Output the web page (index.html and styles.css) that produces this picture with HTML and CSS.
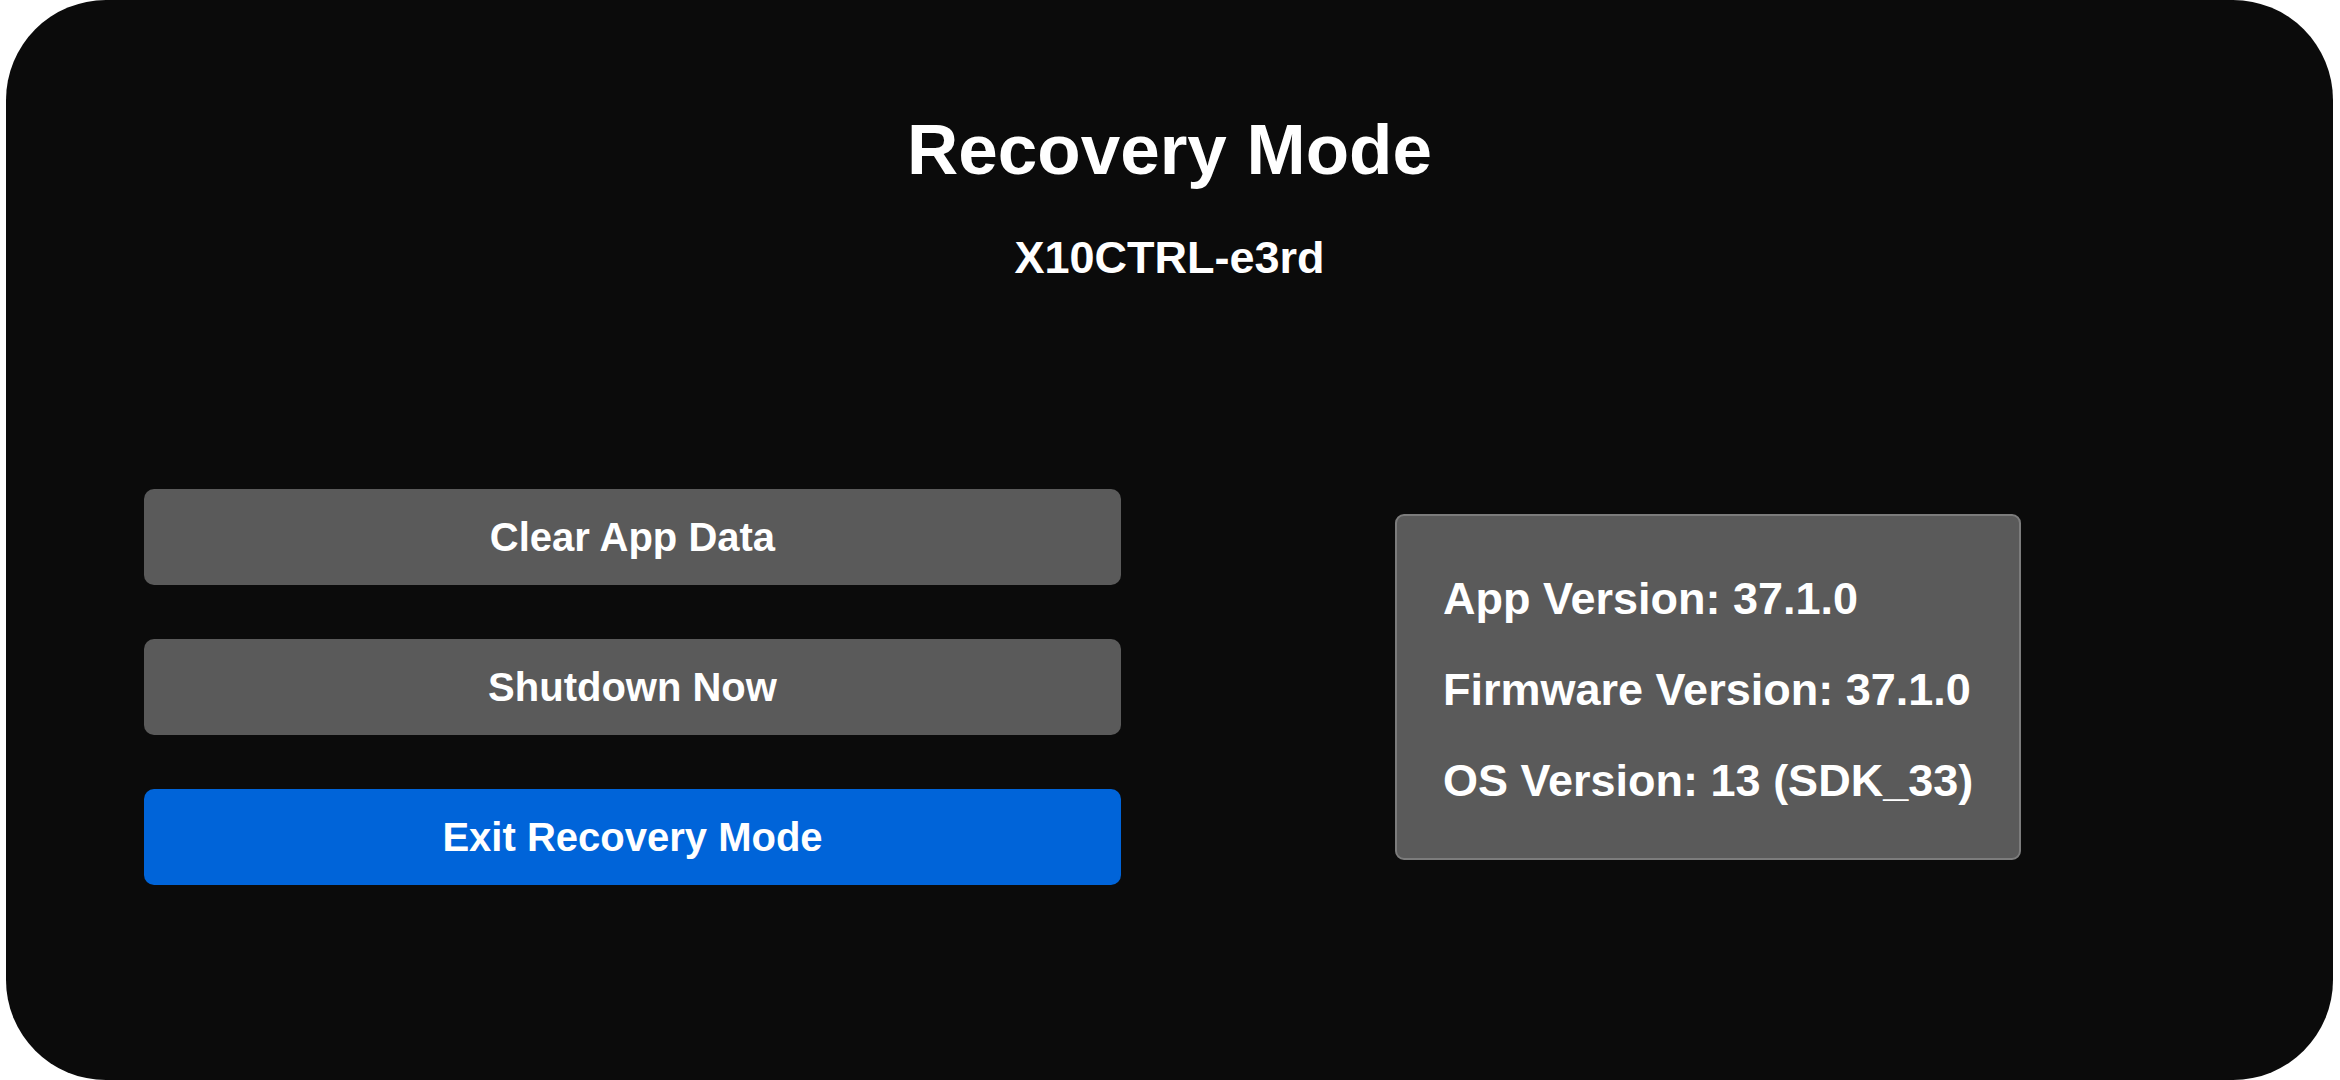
FILE: index.html
```html
<!DOCTYPE html>
<html lang="en">
<head>
<meta charset="utf-8">
<title>Recovery Mode</title>
<link rel="stylesheet" href="styles.css">
</head>
<body>
<div class="screen">
  <h1 class="title">Recovery Mode</h1>
  <div class="device">X10CTRL-e3rd</div>
  <div class="main">
    <div class="actions">
      <button class="btn btn-gray">Clear App Data</button>
      <button class="btn btn-gray">Shutdown Now</button>
      <button class="btn btn-blue">Exit Recovery Mode</button>
    </div>
    <div class="info">
      <div class="info-line">App Version: 37.1.0</div>
      <div class="info-line">Firmware Version: 37.1.0</div>
      <div class="info-line">OS Version: 13 (SDK_33)</div>
    </div>
  </div>
</div>
</body>
</html>
```

FILE: styles.css
```css
html, body {
  margin: 0;
  padding: 0;
  background: #ffffff;
}

body {
  width: 2340px;
  height: 1080px;
  overflow: hidden;
  font-family: "Liberation Sans", Arial, sans-serif;
  color: #ffffff;
}

.screen {
  box-sizing: border-box;
  margin-left: 6px;
  width: 2327px;
  height: 1080px;
  background: #0b0b0b;
  border-radius: 100px;
  padding-top: 110px;
  display: flex;
  flex-direction: column;
}

.title {
  margin: 0;
  font-size: 71px;
  line-height: 80px;
  font-weight: 700;
  text-align: center;
}

.device {
  margin-top: 43px;
  font-size: 45px;
  line-height: 50px;
  font-weight: 700;
  text-align: center;
}

.main {
  margin-top: 206px;
  padding-left: 138px;
  display: flex;
  align-items: center;
  gap: 274px;
}

.actions {
  width: 977px;
  display: flex;
  flex-direction: column;
  gap: 54px;
}

.btn {
  height: 96px;
  border: none;
  border-radius: 10px;
  font-family: "Liberation Sans", Arial, sans-serif;
  font-size: 40px;
  font-weight: 700;
  color: #ffffff;
  padding: 0;
  cursor: pointer;
}

.btn-gray {
  background: #5a5a5a;
}

.btn-blue {
  background: #0064d9;
}

.info {
  background: #5a5a5a;
  border: 2px solid #7c7c7c;
  border-radius: 9px;
  padding: 37px 46px 32px 46px;
}

.info-line {
  font-size: 45px;
  line-height: 91px;
  font-weight: 700;
  white-space: nowrap;
}
```
